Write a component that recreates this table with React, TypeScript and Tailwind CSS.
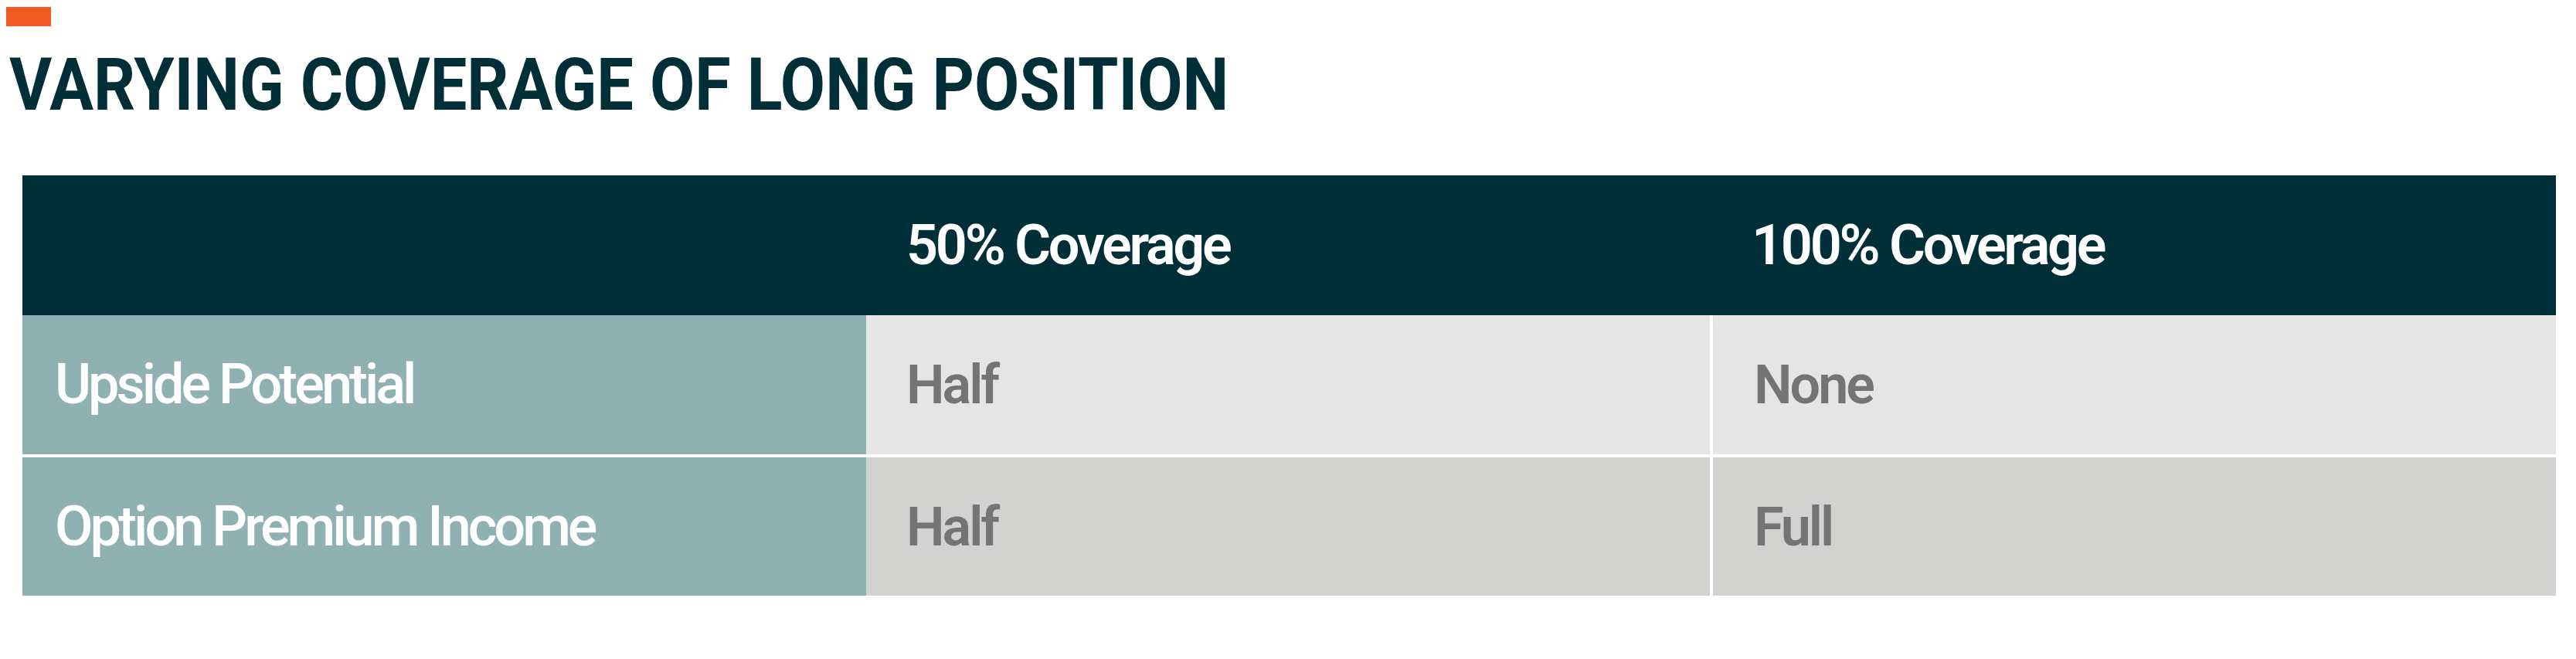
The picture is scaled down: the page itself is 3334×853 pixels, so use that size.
import React from "react";

const rows = [
  { label: "Upside Potential", a: "Half", b: "None", bg: "bg-[#e5e5e5]", h: "h-[180px]" },
  { label: "Option Premium Income", a: "Half", b: "Full", bg: "bg-[#d2d2d0]", h: "h-[179px]" },
];

export default function App() {
  return (
    <div className="w-[3334px] h-[853px] bg-white overflow-hidden font-['Roboto',sans-serif]">
      <div className="pt-[9px] pl-[8px]">
        <div className="w-[58px] h-[25px] bg-[#f15a22]" />
      </div>
      <h1 className="mt-[29px] ml-[12px] text-[94px] leading-none font-bold text-[#002f38] whitespace-nowrap origin-left scale-x-[0.9]">
        VARYING COVERAGE OF LONG POSITION
      </h1>
      <div className="mt-[70px] ml-[29px] w-[3279px] flex flex-col">
        <div className="h-[181px] bg-[#002f38] flex items-center text-white text-[72px] leading-none font-semibold tracking-[-3.3px]">
          <div className="w-[1092px]" />
          <div className="w-[1092px] pl-[52px]">50% Coverage</div>
          <div className="w-[4px]" />
          <div className="flex-1 pl-[50px]">100% Coverage</div>
        </div>
        {rows.map((r, i) => (
          <div key={r.label} className={`flex ${i > 0 ? "mt-[4px]" : ""}`}>
            <div className={`w-[1092px] ${r.h} bg-[#8fb1b1] flex items-center pl-[42px] text-white text-[72px] leading-none font-medium tracking-[-4px]`}>
              {r.label}
            </div>
            <div className={`w-[1092px] ${r.h} ${r.bg} flex items-center pl-[52px] text-[#747474] text-[70px] leading-none font-semibold tracking-[-3px]`}>
              {r.a}
            </div>
            <div className="w-[4px] bg-white" />
            <div className={`flex-1 ${r.h} ${r.bg} flex items-center pl-[53px] text-[#747474] text-[70px] leading-none font-semibold tracking-[-3px]`}>
              {r.b}
            </div>
          </div>
        ))}
      </div>
    </div>
  );
}
